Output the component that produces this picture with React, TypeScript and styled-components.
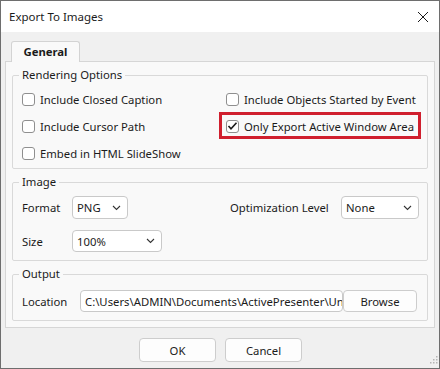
import React from 'react'
import styled, { createGlobalStyle } from 'styled-components'

const GlobalStyle = createGlobalStyle`
  html, body {
    margin: 0;
    padding: 0;
    background: #f0f0f0;
  }
  * {
    box-sizing: border-box;
  }
`

const Window = styled.div`
  width: 440px;
  height: 369px;
  border: 1px solid #6e6e6e;
  background: #f0f0f0;
  display: flex;
  flex-direction: column;
  font-family: "Noto Sans", "Open Sans", sans-serif;
  font-size: 11.3px;
  color: #1b1b1b;
  overflow: hidden;
`

const TitleBar = styled.div`
  height: 31px;
  flex: none;
  background: #ffffff;
  display: flex;
  align-items: center;
  justify-content: space-between;
  padding: 0 9px 0 8px;
`

const Title = styled.div`
  font-size: 11.5px;
`

const CloseButton = styled.div`
  width: 12px;
  height: 12px;
  display: flex;
  margin-right: 1px;
`

const Body = styled.div`
  flex: 1;
  display: flex;
  flex-direction: column;
  padding: 9px 4px 0 4px;
`

const Tabs = styled.div`
  display: flex;
  padding-left: 6px;
  margin-bottom: -1px;
  position: relative;
  z-index: 1;
`

const Tab = styled.div`
  height: 21px;
  width: 69px;
  border: 1px solid #d3d3d3;
  border-bottom: none;
  border-radius: 3px 3px 0 0;
  background: #f9f9f9;
  font-weight: 700;
  display: flex;
  align-items: center;
  justify-content: center;
  padding-bottom: 1px;
`

const Panel = styled.div`
  border: 1px solid #d6d6d6;
  background: #f9f9f9;
  padding: 5px 6px 6px 6px;
  display: flex;
  flex-direction: column;
  gap: 5px;
`

const Group = styled.fieldset<{ $pad: string }>`
  margin: 0;
  border: 1px solid #d9d9d9;
  border-radius: 2px;
  padding: ${p => p.$pad};
  min-width: 0;
`

const Legend = styled.legend`
  padding: 0 3px;
  margin-left: -3px;
  line-height: 16px;
`

const CheckGrid = styled.div`
  display: grid;
  grid-template-columns: 204px 1fr;
  row-gap: 7px;
`

const CheckItem = styled.label`
  display: flex;
  align-items: center;
  height: 20px;
  gap: 5px;
  white-space: nowrap;
`

const Highlight = styled.div`
  justify-self: start;
  border: 3px solid #d01f2e;
  padding: 1px 4px 0 4px;
  margin: -4px -7px -3px -7px;
`

const Box = styled.span`
  width: 13px;
  height: 13px;
  border: 1px solid #8f8f8f;
  border-radius: 3px;
  background: #ffffff;
  display: flex;
  align-items: center;
  justify-content: center;
  flex: none;
`

const FieldRow = styled.div`
  display: flex;
  align-items: center;
`

const FieldLabel = styled.div<{ $w: number }>`
  width: ${p => p.$w}px;
  flex: none;
`

const Select = styled.div<{ $w: number; $h: number }>`
  width: ${p => p.$w}px;
  height: ${p => p.$h}px;
  border: 1px solid #c9c9c9;
  border-radius: 4px;
  background: #ffffff;
  display: flex;
  align-items: center;
  justify-content: space-between;
  padding: 0 6px 0 4px;
`

const ImageRows = styled.div`
  display: flex;
  flex-direction: column;
  gap: 11px;
`

const Spacer = styled.div`
  flex: 1;
`

const PathInput = styled.div`
  width: 263px;
  height: 22px;
  border: 1px solid #c9c9c9;
  border-radius: 4px;
  background: #ffffff;
  display: flex;
  align-items: center;
  padding: 0 4px;
  overflow: hidden;
  white-space: nowrap;
`

const Button = styled.div<{ $w: number; $h?: number }>`
  width: ${p => p.$w}px;
  height: ${p => p.$h ?? 24}px;
  border: 1px solid #cdcdcd;
  border-radius: 4px;
  background: #fdfdfd;
  display: flex;
  align-items: center;
  justify-content: center;
  flex: none;
`

const Footer = styled.div`
  display: flex;
  justify-content: center;
  gap: 9px;
  padding-top: 10px;
  padding-left: 1px;
`

const Grip = styled.div`
  display: flex;
  justify-content: flex-end;
  margin-top: -6px;
  margin-right: -3px;
`

const Chevron = () => (
  <svg width="9" height="6" viewBox="0 0 9 6">
    <polyline points="1,1 4.5,4.5 8,1" fill="none" stroke="#333" strokeWidth="1.1" />
  </svg>
)

const Check = () => (
  <svg width="11" height="10" viewBox="0 0 11 10">
    <polyline points="1.5,5 4,7.8 9.5,1.8" fill="none" stroke="#1b1b1b" strokeWidth="1.6" />
  </svg>
)

const App = () => {
  return (
    <>
      <GlobalStyle />
      <Window>
        <TitleBar>
          <Title>Export To Images</Title>
          <CloseButton>
            <svg width="12" height="12" viewBox="0 0 12 12">
              <path d="M1 1 L11 11 M11 1 L1 11" stroke="#1b1b1b" strokeWidth="1" />
            </svg>
          </CloseButton>
        </TitleBar>
        <Body>
          <Tabs>
            <Tab>General</Tab>
          </Tabs>
          <Panel>
            <Group $pad="6px 9px 5px 9px">
              <Legend>Rendering Options</Legend>
              <CheckGrid>
                <CheckItem>
                  <Box />
                  Include Closed Caption
                </CheckItem>
                <CheckItem>
                  <Box />
                  Include Objects Started by Event
                </CheckItem>
                <CheckItem>
                  <Box />
                  Include Cursor Path
                </CheckItem>
                <Highlight>
                  <CheckItem>
                    <Box>
                      <Check />
                    </Box>
                    Only Export Active Window Area
                  </CheckItem>
                </Highlight>
                <CheckItem>
                  <Box />
                  Embed in HTML SlideShow
                </CheckItem>
              </CheckGrid>
            </Group>
            <Group $pad="6px 8px 8px 9px">
              <Legend>Image</Legend>
              <ImageRows>
                <FieldRow>
                  <FieldLabel $w={50}>Format</FieldLabel>
                  <Select $w={56} $h={23}>
                    PNG
                    <Chevron />
                  </Select>
                  <Spacer />
                  <FieldLabel $w={111}>Optimization Level</FieldLabel>
                  <Select $w={78} $h={23}>
                    None
                    <Chevron />
                  </Select>
                </FieldRow>
                <FieldRow>
                  <FieldLabel $w={50}>Size</FieldLabel>
                  <Select $w={90} $h={22}>
                    100%
                    <Chevron />
                  </Select>
                </FieldRow>
              </ImageRows>
            </Group>
            <Group $pad="8px 8px 8px 9px">
              <Legend>Output</Legend>
              <FieldRow>
                <FieldLabel $w={58}>Location</FieldLabel>
                <PathInput>C:\Users\ADMIN\Documents\ActivePresenter\Untitled</PathInput>
                <Button $w={74} $h={22}>Browse</Button>
              </FieldRow>
            </Group>
          </Panel>
          <Footer>
            <Button $w={77}>OK</Button>
            <Button $w={77}>Cancel</Button>
          </Footer>
          <Grip>
            <svg width="8" height="8" viewBox="0 0 8 8">
              <g fill="#b5b5b5">
                <rect x="6" y="0" width="1.5" height="1.5" />
                <rect x="3" y="3" width="1.5" height="1.5" />
                <rect x="6" y="3" width="1.5" height="1.5" />
                <rect x="0" y="6" width="1.5" height="1.5" />
                <rect x="3" y="6" width="1.5" height="1.5" />
                <rect x="6" y="6" width="1.5" height="1.5" />
              </g>
            </svg>
          </Grip>
        </Body>
      </Window>
    </>
  )
}

export default App
